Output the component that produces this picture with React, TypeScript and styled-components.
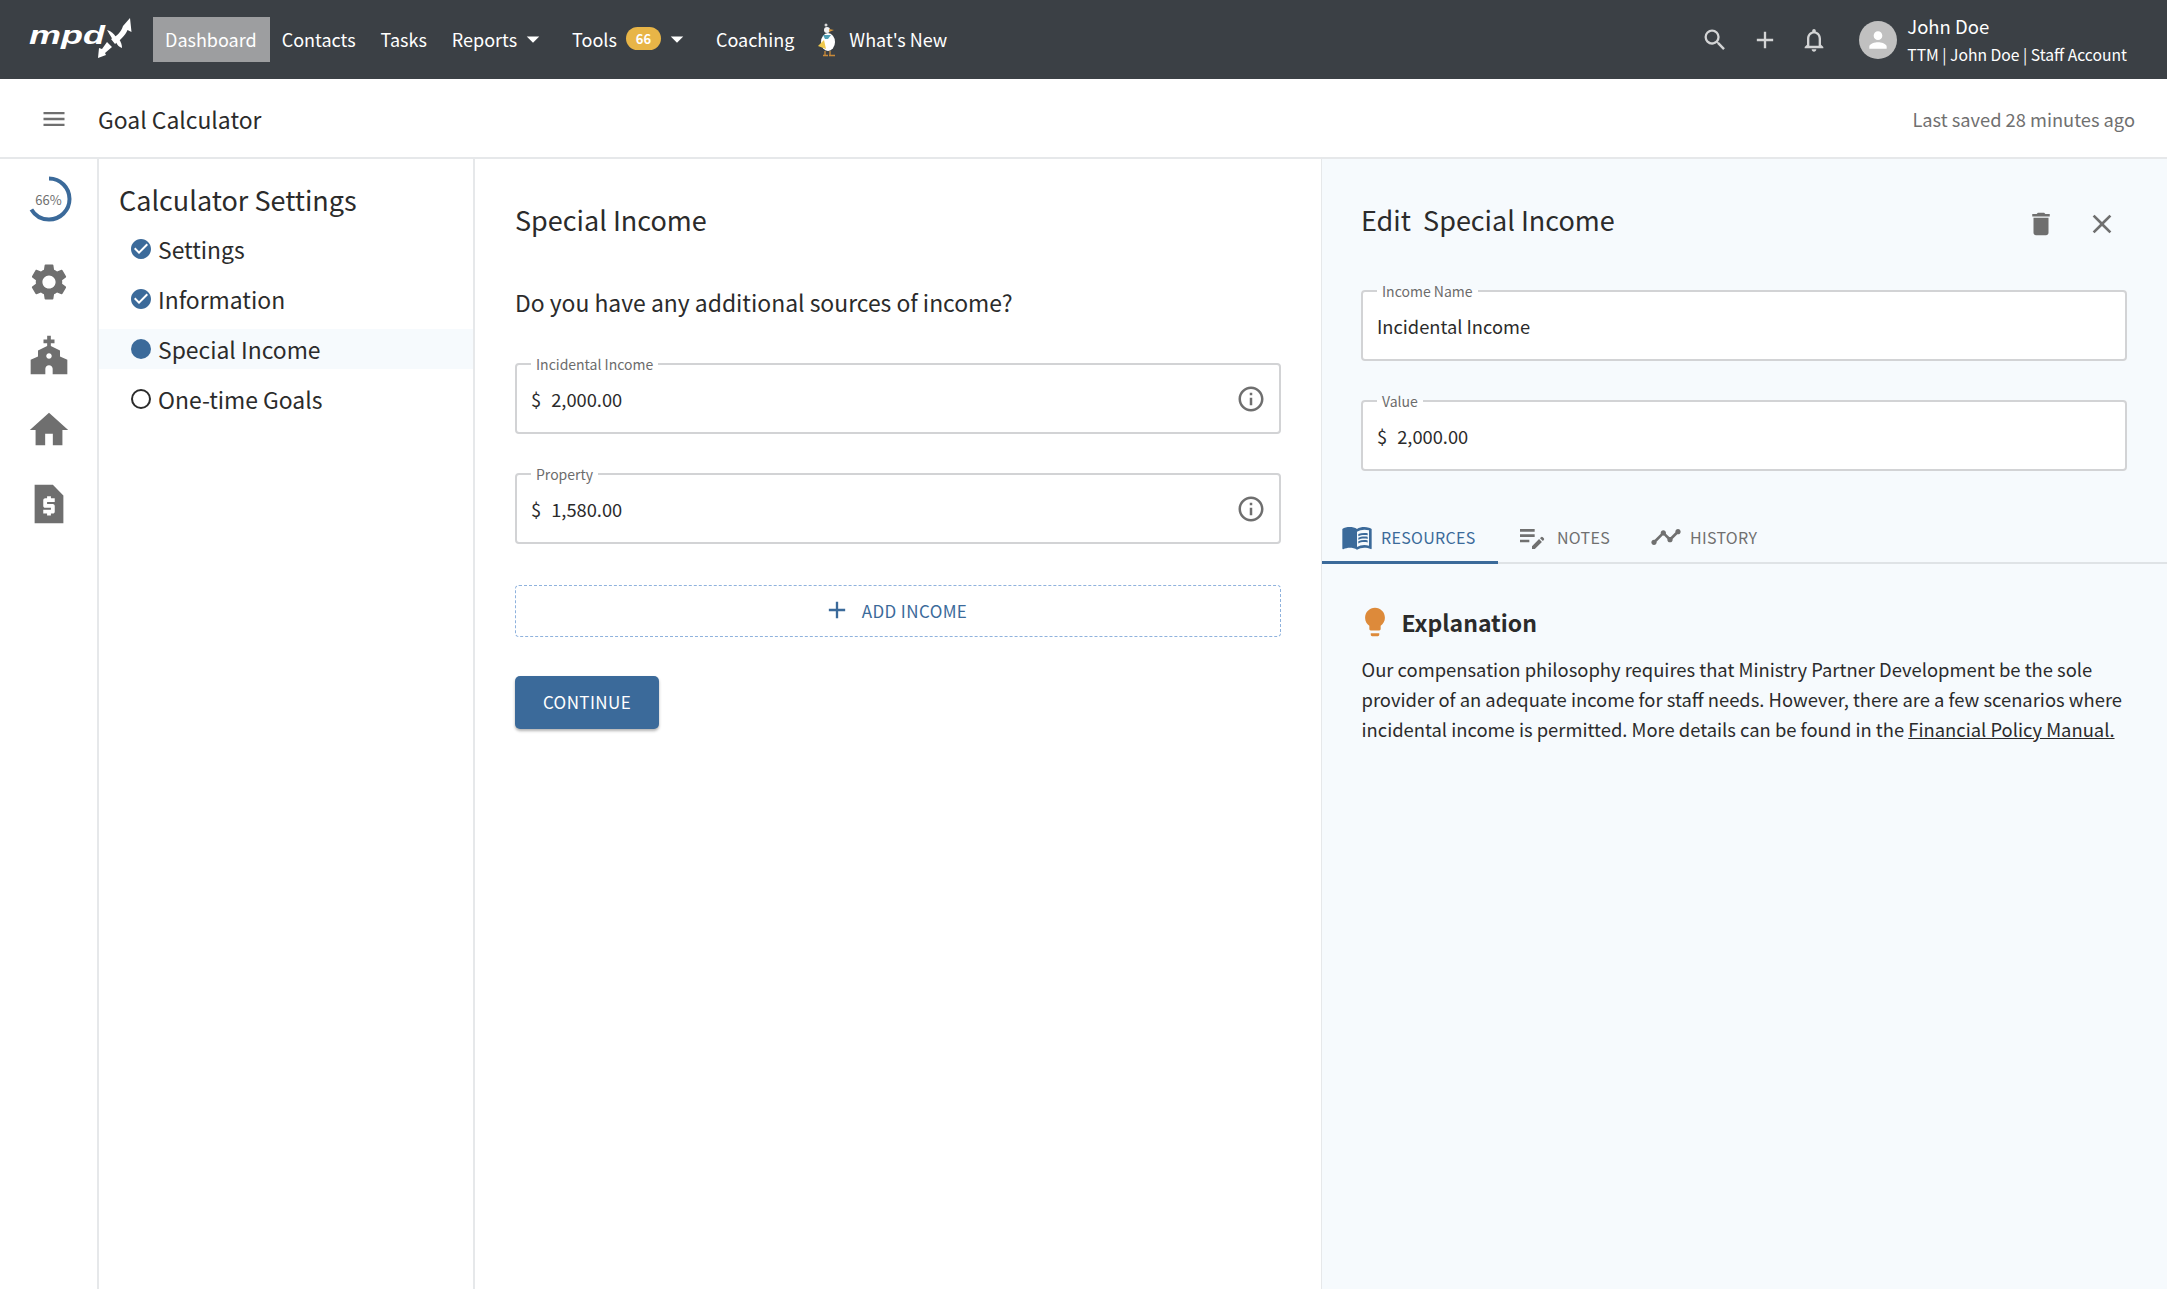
import React from 'react';
import styled, { createGlobalStyle } from 'styled-components';
import {
  MdAdd,
  MdArrowDropDown,
  MdCheckCircle,
  MdChurch,
  MdClose,
  MdDelete,
  MdEditNote,
  MdHome,
  MdInfoOutline,
  MdLightbulb,
  MdMenu,
  MdMenuBook,
  MdNotificationsNone,
  MdPerson,
  MdSearch,
  MdSettings,
  MdTimeline,
} from 'react-icons/md';

const primary = '#3b6a9a';
const ink = '#2b2b2b';
const panelBg = '#f6fafd';
const line = '#e6e8ea';

const GlobalStyle = createGlobalStyle`
  html, body {
    margin: 0;
    height: 100%;
    overflow: hidden;
    background: #fff;
  }
  body, button {
    font-family: "Noto Sans CJK SC", "Noto Sans", sans-serif;
    color: ${ink};
  }
  * {
    box-sizing: border-box;
  }
`;

const Page = styled.div`
  display: flex;
  flex-direction: column;
  height: 100vh;
`;

const TopBar = styled.header`
  display: flex;
  align-items: center;
  flex: 0 0 79px;
  padding: 0 40px 0 27px;
  background: #3b4045;
  color: #fff;
`;

const Logo = styled.svg`
  width: 106px;
  height: 44px;
  margin-right: 20px;
  flex: none;
`;

const NavItem = styled.a<{ $active?: boolean; $bare?: boolean }>`
  display: flex;
  align-items: center;
  height: 45px;
  padding: ${(props) => (props.$bare ? '0' : '0 13px 0 12px')};
  padding-bottom: 2px;
  font-size: 18px;
  line-height: 24px;
  color: #fff;
  background: ${(props) => (props.$active ? '#9d9ea0' : 'transparent')};
`;

const Badge = styled.span`
  display: inline-flex;
  align-items: center;
  justify-content: center;
  width: 35px;
  height: 23px;
  margin-left: 9px;
  border-radius: 12px;
  background: #e8b547;
  font-size: 13px;
  font-weight: 700;
`;

const Caret = styled(MdArrowDropDown)`
  width: 30px;
  height: 30px;
  margin: 0 -1px 0 1px;
`;

const DuckIcon = styled.svg`
  width: 24px;
  height: 36px;
  margin: 0 10px 0 8px;
  flex: none;
`;

const TopActions = styled.div`
  display: flex;
  align-items: center;
  margin-left: auto;
  color: #d3d4d5;
`;

const TopIcon = styled.span`
  display: flex;
  width: 28px;
  margin-right: 21.500px;
  justify-content: center;
`;

const Avatar = styled.span`
  display: flex;
  align-items: center;
  justify-content: center;
  width: 38px;
  height: 38px;
  margin: 0 10px 0 9.500px;
  border-radius: 50%;
  background: #c0c0c0;
  color: #fff;
`;

const UserBlock = styled.div`
  display: flex;
  flex-direction: column;
  gap: 4px;
  color: #fff;
`;

const UserName = styled.span`
  font-size: 18.500px;
  line-height: 26px;
`;

const UserAccount = styled.span`
  font-size: 15.700px;
  line-height: 24px;
`;

const TitleBar = styled.div`
  display: flex;
  align-items: center;
  flex: 0 0 80px;
  padding: 2px 32px 0 40px;
  border-bottom: 2px solid ${line};
`;

const MenuIcon = styled(MdMenu)`
  width: 28px;
  height: 28px;
  margin-right: 30px;
  color: #6f6f6f;
`;

const PageTitle = styled.h1`
  margin: 0;
  font-size: 22.900px;
  font-weight: 400;
  line-height: 32px;
`;

const SavedNote = styled.span`
  margin-left: auto;
  font-size: 18.300px;
  color: #707070;
`;

const Body = styled.div`
  display: grid;
  grid-template-columns: 99px 376px 846px 1fr;
  flex: 1;
  min-height: 0;
`;

const Rail = styled.nav`
  display: flex;
  flex-direction: column;
  align-items: center;
  padding-top: 17px;
  border-right: 2px solid ${line};
  color: #6f6f6f;
`;

const Progress = styled.div`
  position: relative;
  width: 46px;
  height: 46px;
  margin-bottom: 38px;
`;

const ProgressLabel = styled.span`
  position: absolute;
  inset: 0;
  display: flex;
  align-items: center;
  justify-content: center;
  font-size: 13px;
  color: #6f6f6f;
`;

const RailIcon = styled.span`
  display: flex;
  height: 73.500px;
  justify-content: center;
  align-items: flex-start;
`;

const QuoteIcon = styled.svg`
  width: 46px;
  height: 46px;
  fill: currentColor;
`;

const StepPanel = styled.aside`
  padding-top: 22px;
  border-right: 2px solid ${line};
`;

const StepTitle = styled.h2`
  margin: 0 0 10px 20px;
  font-size: 27px;
  font-weight: 400;
  line-height: 38px;
`;

const StepList = styled.ul`
  display: flex;
  flex-direction: column;
  gap: 10px;
  margin: 0;
  padding: 0;
  list-style: none;
`;

const StepRow = styled.li<{ $current?: boolean }>`
  display: flex;
  align-items: center;
  height: 40px;
  padding-left: 32px;
  gap: 7px;
  font-size: 22.900px;
  background: ${(props) => (props.$current ? panelBg : 'transparent')};
`;

const StepMark = styled.span<{ $outline?: boolean }>`
  display: block;
  width: 20px;
  height: 20px;
  border-radius: 50%;
  background: ${(props) => (props.$outline ? 'transparent' : primary)};
  border: ${(props) => (props.$outline ? `2px solid ${ink}` : 'none')};
`;

const DoneMark = styled(MdCheckCircle)`
  width: 24px;
  height: 24px;
  margin: 0 -2px;
  color: ${primary};
`;

const Main = styled.main`
  padding: 38px 40px 0 40px;
`;

const SectionHeading = styled.h2`
  margin: 0;
  font-size: 27px;
  font-weight: 400;
  line-height: 46px;
`;

const Question = styled.p`
  margin: 43px 0 36px;
  font-size: 22.900px;
  line-height: 32px;
`;

const Field = styled.fieldset<{ $spaced?: number }>`
  display: flex;
  align-items: center;
  height: 80px;
  margin: ${(props) => props.$spaced ?? 0}px 0 0;
  padding: 0 14px 9px;
  min-inline-size: 0;
  border: 2px solid #d2d3d5;
  border-radius: 4px;
  background: #fff;
`;

const FieldLegend = styled.legend`
  padding: 0 5px;
  font-size: 14px;
  line-height: 20px;
  color: #6c6c6c;
`;

const FieldRow = styled.div`
  display: flex;
  align-items: center;
  width: 100%;
  font-size: 18.300px;
  line-height: 26px;
`;

const Prefix = styled.span`
  margin-right: 10px;
`;

const InfoIcon = styled(MdInfoOutline)`
  width: 30px;
  height: 30px;
  margin-left: auto;
  margin-right: -1px;
  color: #6f6f6f;
`;

const AddButton = styled.button`
  display: flex;
  align-items: center;
  justify-content: center;
  gap: 11px;
  width: 100%;
  height: 52px;
  margin-top: 41px;
  padding: 0 6px 2px 0;
  border: 1px dashed #8fb2dd;
  border-radius: 4px;
  background: transparent;
  color: ${primary};
  font-size: 17px;
  letter-spacing: 0.4px;
`;

const ContinueButton = styled.button`
  display: block;
  width: 144px;
  height: 53px;
  margin-top: 39px;
  padding-bottom: 3px;
  border: none;
  border-radius: 5px;
  background: ${primary};
  color: #fff;
  font-size: 17px;
  letter-spacing: 0.4px;
  box-shadow: 0 2px 3px rgba(0, 0, 0, 0.3);
`;

const EditPanel = styled.section`
  padding-top: 38px;
  border-left: 1px solid ${line};
  background: ${panelBg};
`;

const EditHead = styled.div`
  display: flex;
  align-items: center;
  height: 46px;
  margin-bottom: 38px;
  padding: 0 49px 0 39px;
`;

const EditTitle = styled(SectionHeading)`
  margin-right: auto;
  color: ${ink};
`;

const EditActions = styled.div`
  display: flex;
  align-items: center;
  gap: 30px;
  margin-top: 8px;
  color: #6f6f6f;
`;

const EditFields = styled.div`
  padding: 0 40px 0 39px;
`;

const Tabs = styled.div`
  display: flex;
  height: 56px;
  margin-top: 37px;
  border-bottom: 2px solid #dfe3e6;
`;

const Tab = styled.div<{ $width: number; $inset: number; $gap: number; $active?: boolean }>`
  display: flex;
  align-items: center;
  gap: ${(props) => props.$gap}px;
  width: ${(props) => props.$width}px;
  height: 56px;
  padding: 4px 0 0 ${(props) => props.$inset}px;
  border-bottom: 3px solid ${(props) => (props.$active ? primary : 'transparent')};
  color: ${(props) => (props.$active ? primary : '#707070')};
  font-size: 16px;
  letter-spacing: 0.3px;
`;

const Explanation = styled.div`
  padding: 40px 40px 0 39.500px;
`;

const ExplanationHead = styled.div`
  display: flex;
  align-items: center;
  gap: 10px;
  height: 36px;
  margin-bottom: 14px;
  font-size: 23px;
  font-weight: 700;
`;

const Bulb = styled(MdLightbulb)`
  width: 34px;
  height: 34px;
  margin-left: -4px;
  color: #dd8a3a;
`;

const Paragraph = styled.p`
  margin: 0;
  font-size: 18.400px;
  line-height: 30px;
`;

const PolicyLink = styled.a`
  color: ${ink};
  text-decoration: underline;
`;

const TextField: React.FC<{ label: string; prefix?: string; value: string; info?: boolean; spaced?: number }> = ({
  label,
  prefix,
  value,
  info,
  spaced,
}) => (
  <Field $spaced={spaced}>
    <FieldLegend>{label}</FieldLegend>
    <FieldRow>
      {prefix && <Prefix>{prefix}</Prefix>}
      {value}
      {info && <InfoIcon />}
    </FieldRow>
  </Field>
);

const Duck: React.FC = () => (
  <DuckIcon viewBox="0 0 24 36">
    <circle cx="12" cy="8" r="3" fill="#f3f3f3" />
    <circle cx="11" cy="3" r="1.5" fill="#d8d8d8" />
    <path d="M14 7l5 1-5 2z" fill="#d99a3c" />
    <ellipse cx="13" cy="20" rx="7" ry="9" fill="#fff" />
    <path d="M8 13l8 0-3 4-3 0z" fill="#4f9fb5" />
    <path d="M3 24l6-6 2 9z" fill="#efc94c" />
    <path d="M10 29v4M15 29v4M8 33.500h5M14 33.500h6" stroke="#c98a3a" strokeWidth="1.300" fill="none" />
  </DuckIcon>
);

const App: React.FC = () => (
  <Page>
    <GlobalStyle />
    <TopBar>
      <Logo viewBox="0 0 106 44">
        <text
          x="2"
          y="25.500"
          fontFamily="'Liberation Sans', sans-serif"
          fontSize="25"
          fontWeight="700"
          fontStyle="italic"
          fill="#fff"
          textLength="76"
          lengthAdjust="spacingAndGlyphs"
        >
          mpd
        </text>
        <path d="M103 0L104.500 14 100.500 12C98 18 93 22 88 26L84 21C90 18 94 14 96 8Z" fill="#fff" />
        <path d="M71 40L72 30 75 31 80 24 85 29 78 35 79 37Z" fill="#fff" />
        <path d="M80 12C84 13 87 16 89 19L86 22Z" fill="#fff" />
        <path d="M89 24L92 21C94 24 95 27 95 30 92 29 90 27 89 24Z" fill="#fff" />
      </Logo>
      <NavItem $active>Dashboard</NavItem>
      <NavItem>Contacts</NavItem>
      <NavItem>Tasks</NavItem>
      <NavItem>
        Reports
        <Caret />
      </NavItem>
      <NavItem>
        Tools
        <Badge>66</Badge>
        <Caret />
      </NavItem>
      <NavItem>Coaching</NavItem>
      <Duck />
      <NavItem $bare>What's New</NavItem>
      <TopActions>
        <TopIcon>
          <MdSearch size={32} />
        </TopIcon>
        <TopIcon>
          <MdAdd size={32} />
        </TopIcon>
        <TopIcon>
          <MdNotificationsNone size={32} />
        </TopIcon>
        <Avatar>
          <MdPerson size={26} />
        </Avatar>
        <UserBlock>
          <UserName>John Doe</UserName>
          <UserAccount>TTM | John Doe | Staff Account</UserAccount>
        </UserBlock>
      </TopActions>
    </TopBar>
    <TitleBar>
      <MenuIcon />
      <PageTitle>Goal Calculator</PageTitle>
      <SavedNote>Last saved 28 minutes ago</SavedNote>
    </TitleBar>
    <Body>
      <Rail>
        <Progress>
          <svg width="46" height="46" viewBox="0 0 46 46">
            <circle
              cx="23"
              cy="23"
              r="20.500"
              fill="none"
              stroke={primary}
              strokeWidth="4"
              strokeDasharray={`${2 * Math.PI * 20.5 * 0.66} 200`}
              transform="rotate(-90 23 23)"
            />
          </svg>
          <ProgressLabel>66%</ProgressLabel>
        </Progress>
        <RailIcon>
          <MdSettings size={44} />
        </RailIcon>
        <RailIcon>
          <MdChurch size={44} />
        </RailIcon>
        <RailIcon>
          <MdHome size={46} />
        </RailIcon>
        <RailIcon>
          <QuoteIcon viewBox="0 0 24 24">
            <path
              fillRule="evenodd"
              d="M14 2H4.500v20h15V7.500zM15 11h-4v1h3c.55 0 1 .45 1 1v3c0 .55-.45 1-1 1h-1v1h-2v-1H9v-2h4v-1h-3c-.55 0-1-.45-1-1v-3c0-.55.45-1 1-1h1V8h2v1h2z"
            />
          </QuoteIcon>
        </RailIcon>
      </Rail>
      <StepPanel>
        <StepTitle>Calculator Settings</StepTitle>
        <StepList>
          <StepRow>
            <DoneMark />
            Settings
          </StepRow>
          <StepRow>
            <DoneMark />
            Information
          </StepRow>
          <StepRow $current>
            <StepMark />
            Special Income
          </StepRow>
          <StepRow>
            <StepMark $outline />
            One-time Goals
          </StepRow>
        </StepList>
      </StepPanel>
      <Main>
        <SectionHeading>Special Income</SectionHeading>
        <Question>Do you have any additional sources of income?</Question>
        <TextField label="Incidental Income" prefix="$" value="2,000.00" info />
        <TextField label="Property" prefix="$" value="1,580.00" info spaced={30} />
        <AddButton>
          <MdAdd size={28} />
          ADD INCOME
        </AddButton>
        <ContinueButton>CONTINUE</ContinueButton>
      </Main>
      <EditPanel>
        <EditHead>
          <EditTitle as="h2">Edit&nbsp; Special Income</EditTitle>
          <EditActions>
            <MdDelete size={30} />
            <MdClose size={32} />
          </EditActions>
        </EditHead>
        <EditFields>
          <TextField label="Income Name" value="Incidental Income" />
          <TextField label="Value" prefix="$" value="2,000.00" spaced={30} />
        </EditFields>
        <Tabs>
          <Tab $active $width={176} $inset={19} $gap={8}>
            <MdMenuBook size={32} />
            RESOURCES
          </Tab>
          <Tab $width={150} $inset={18} $gap={9}>
            <MdEditNote size={32} />
            NOTES
          </Tab>
          <Tab $width={136} $inset={2} $gap={8}>
            <MdTimeline size={32} />
            HISTORY
          </Tab>
        </Tabs>
        <Explanation>
          <ExplanationHead>
            <Bulb />
            Explanation
          </ExplanationHead>
          <Paragraph>
            Our compensation philosophy requires that Ministry Partner Development be the sole provider of an adequate
            income for staff needs. However, there are a few scenarios where incidental income is permitted. More details
            can be found in the <PolicyLink>Financial Policy Manual.</PolicyLink>
          </Paragraph>
        </Explanation>
      </EditPanel>
    </Body>
  </Page>
);

export default App;
